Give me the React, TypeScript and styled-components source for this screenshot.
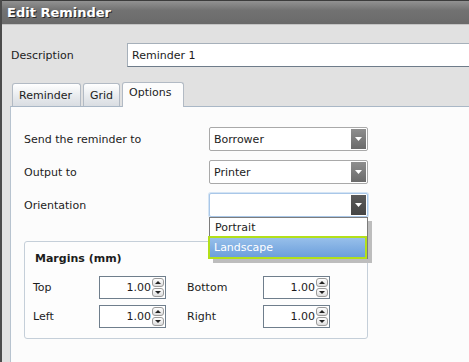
import React from "react";
import styled, { createGlobalStyle } from "styled-components";

const GlobalStyle = createGlobalStyle`
  html, body {
    margin: 0;
    padding: 0;
    background: #fcfcfc;
    overflow: hidden;
  }
  body {
    font-family: "DejaVu Sans", Verdana, sans-serif;
    font-size: 11px;
    color: #1c1c1c;
  }
`;

const Dialog = styled.div`
  width: 469px;
  height: 362px;
  box-sizing: border-box;
  border-left: 2px solid #4b4b4b;
  background: #e1e1e1;
  display: flex;
  flex-direction: column;
  overflow: hidden;
`;

const TitleBar = styled.div`
  height: 25px;
  flex: none;
  box-sizing: border-box;
  border-top: 1px solid #3c3c3c;
  border-bottom: 1px solid #c4c4c4;
  background: linear-gradient(#929292, #727272 40%, #6a6a6a);
  color: #fff;
  font-weight: bold;
  font-size: 13px;
  padding-left: 5px;
  display: flex;
  align-items: center;
  text-shadow: 1px 1px 0 #2a2a2a;
`;

const DescRow = styled.div`
  display: flex;
  align-items: center;
  margin-top: 18px;
  padding-left: 9px;
  height: 24px;
  flex: none;
`;

const DescLabel = styled.div`
  width: 116px;
  flex: none;
`;

const TextBox = styled.div`
  flex: 1;
  height: 24px;
  box-sizing: border-box;
  margin-right: -10px;
  background: #fff;
  border: 1px solid #a6b0ba;
  border-bottom-color: #6e7c8a;
  padding-left: 4px;
  display: flex;
  align-items: center;
`;

const TabStrip = styled.div`
  display: flex;
  align-items: flex-end;
  gap: 2px;
  height: 24px;
  margin-top: 15px;
  padding-left: 10px;
  flex: none;
  position: relative;
  z-index: 1;
`;

const Tab = styled.div<{ $active?: boolean; $width: number }>`
  box-sizing: border-box;
  width: ${(p) => p.$width}px;
  height: ${(p) => (p.$active ? 25 : 23)}px;
  margin-bottom: ${(p) => (p.$active ? -1 : 0)}px;
  padding: ${(p) => (p.$active ? "3px 0 0 6px" : "5px 0 0 6px")};
  border: 1px solid #b2bac4;
  border-bottom: none;
  border-radius: 3px 3px 0 0;
  background: ${(p) =>
    p.$active ? "#fcfcfc" : "linear-gradient(#ffffff, #e8ebee 55%, #d9dde2)"};
  color: #1c1c1c;
  white-space: nowrap;
  overflow: hidden;
`;

const Panel = styled.div`
  flex: 1;
  margin-left: 8px;
  border-top: 1px solid #a9b7c6;
  border-left: 1px solid #b7c3cf;
  background: #fcfcfc;
  padding: 20px 0 0 13px;
`;

const FormRows = styled.div`
  display: flex;
  flex-direction: column;
  gap: 9px;
  width: 344px;
`;

const FormRow = styled.div`
  display: grid;
  grid-template-columns: 185px 159px;
  align-items: center;
`;

const SelectBox = styled.div<{ $focused?: boolean }>`
  position: relative;
  height: 24px;
  box-sizing: border-box;
  background: #fff;
  border: 1px solid ${(p) => (p.$focused ? "#a9c7e8" : "#a9a9a9")};
  box-shadow: ${(p) => (p.$focused ? "0 0 0 1px #d4e4f4" : "none")};
  border-radius: 2px;
  display: flex;
  align-items: center;
  padding-left: 4px;
`;

const SelectArrow = styled.div<{ $focused?: boolean }>`
  position: absolute;
  right: 1px;
  top: 1px;
  bottom: 1px;
  width: 15px;
  background: ${(p) =>
    p.$focused
      ? "linear-gradient(#5a5a5a, #454545)"
      : "linear-gradient(#8e8e8e, #6a6a6a)"};
  display: flex;
  align-items: center;
  justify-content: center;
`;

const DropList = styled.div`
  position: absolute;
  left: -1px;
  top: 23px;
  width: 159px;
  box-sizing: border-box;
  background: #fff;
  border: 1px solid #7c7c7c;
  border-bottom: none;
  box-shadow: 4px 4px 0 #bdbdbd;
  z-index: 5;
`;

const DropItem = styled.div<{ $selected?: boolean }>`
  box-sizing: border-box;
  height: ${(p) => (p.$selected ? 23 : 18)}px;
  display: flex;
  align-items: center;
  padding-left: ${(p) => (p.$selected ? 4 : 5)}px;
  margin: ${(p) => (p.$selected ? "0 0 0 -2px" : "0")};
  color: ${(p) => (p.$selected ? "#fff" : "#1c1c1c")};
  border: ${(p) => (p.$selected ? "2px solid #b3e01a" : "none")};
  background: ${(p) =>
    p.$selected ? "linear-gradient(#97bfea, #6c9fdc)" : "transparent"};
`;

const GroupBox = styled.div`
  margin-top: 24px;
  width: 344px;
  box-sizing: border-box;
  border: 1px solid #c5cfd9;
  border-radius: 3px;
  background: #fdfdfd;
  padding: 10px 0 10px 8px;
`;

const GroupTitle = styled.div`
  font-weight: bold;
  padding-left: 2px;
  line-height: 13px;
`;

const MarginGrid = styled.div`
  display: grid;
  grid-template-columns: 66px 88px 76px 67px;
  grid-auto-rows: 23px;
  row-gap: 6px;
  margin-top: 11px;
  align-items: center;
`;

const NumBox = styled.div`
  width: 67px;
  height: 23px;
  box-sizing: border-box;
  border: 1px solid #6f7e8c;
  background: #fff;
  display: flex;
  align-items: center;
  justify-content: flex-end;
  padding-right: 1px;
`;

const NumValue = styled.span`
  padding-right: 1px;
`;

const Spinner = styled.div`
  display: flex;
  flex-direction: column;
  gap: 1px;
  width: 12px;
`;

const SpinButton = styled.div`
  height: 9px;
  box-sizing: border-box;
  border: 1px solid #9a9a9a;
  border-radius: 3px;
  background: linear-gradient(#ffffff, #dedede);
  display: flex;
  align-items: center;
  justify-content: center;
`;

const Tri: React.FC<{ up?: boolean; color?: string; w?: number; h?: number }> = ({
  up,
  color = "#fff",
  w = 7,
  h = 4,
}) => (
  <svg width={w} height={h} viewBox={`0 0 ${w} ${h}`}>
    <polygon
      points={up ? `0,${h} ${w},${h} ${w / 2},0` : `0,0 ${w},0 ${w / 2},${h}`}
      fill={color}
    />
  </svg>
);

const Select: React.FC<{ value: string; focused?: boolean; children?: React.ReactNode }> = ({
  value,
  focused,
  children,
}) => (
  <SelectBox $focused={focused}>
    {value}
    <SelectArrow $focused={focused}>
      <Tri />
    </SelectArrow>
    {children}
  </SelectBox>
);

const Numeric: React.FC<{ value: string }> = ({ value }) => (
  <NumBox>
    <NumValue>{value}</NumValue>
    <Spinner>
      <SpinButton>
        <Tri up color="#222" w={6} h={3} />
      </SpinButton>
      <SpinButton>
        <Tri color="#222" w={6} h={3} />
      </SpinButton>
    </Spinner>
  </NumBox>
);

const App: React.FC = () => {
  return (
    <>
      <GlobalStyle />
      <Dialog>
        <TitleBar>Edit Reminder</TitleBar>
        <DescRow>
          <DescLabel>Description</DescLabel>
          <TextBox>Reminder 1</TextBox>
        </DescRow>
        <TabStrip>
          <Tab $width={69}>Reminder</Tab>
          <Tab $width={37}>Grid</Tab>
          <Tab $width={62} $active>
            Options
          </Tab>
        </TabStrip>
        <Panel>
          <FormRows>
            <FormRow>
              <div>Send the reminder to</div>
              <Select value="Borrower" />
            </FormRow>
            <FormRow>
              <div>Output to</div>
              <Select value="Printer" />
            </FormRow>
            <FormRow>
              <div>Orientation</div>
              <Select value="" focused>
                <DropList>
                  <DropItem>Portrait</DropItem>
                  <DropItem $selected>Landscape</DropItem>
                </DropList>
              </Select>
            </FormRow>
          </FormRows>
          <GroupBox>
            <GroupTitle>Margins (mm)</GroupTitle>
            <MarginGrid>
              <div>Top</div>
              <Numeric value="1.00" />
              <div>Bottom</div>
              <Numeric value="1.00" />
              <div>Left</div>
              <Numeric value="1.00" />
              <div>Right</div>
              <Numeric value="1.00" />
            </MarginGrid>
          </GroupBox>
        </Panel>
      </Dialog>
    </>
  );
};

export default App;
